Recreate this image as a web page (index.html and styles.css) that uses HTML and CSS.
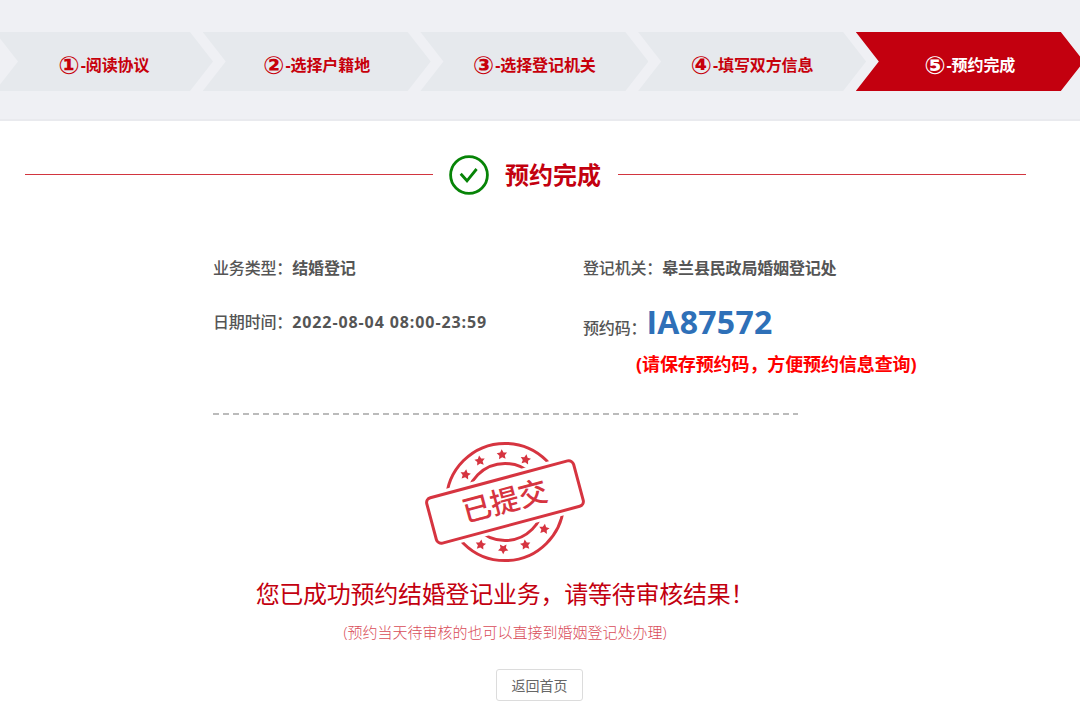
FILE: index.html
```
<!DOCTYPE html>
<html lang="zh-CN">
<head>
<meta charset="UTF-8">
<meta name="viewport" content="width=device-width, initial-scale=1.0">
<title>预约完成</title>
<link rel="stylesheet" href="styles.css">
</head>
<body>
<div class="steps">
	<div class="step first"><span class="num">①</span>-阅读协议</div>
	<div class="step"><span class="num">②</span>-选择户籍地</div>
	<div class="step"><span class="num">③</span>-选择登记机关</div>
	<div class="step"><span class="num">④</span>-填写双方信息</div>
	<div class="step active"><span class="num">⑤</span>-预约完成</div>
</div>

<div class="title">
	<span class="line"></span>
	<svg class="check" width="40" height="40" viewBox="0 0 40 40">
		<circle cx="20" cy="20" r="18.4"/>
		<path d="M11.7 18.8 L18 25.8 L27.6 14"/>
	</svg>
	<h2>预约完成</h2>
	<span class="line"></span>
</div>

<div class="info">
	<div class="item">业务类型：<b>结婚登记</b></div>
	<div class="item">登记机关：<b>皋兰县民政局婚姻登记处</b></div>
	<div class="item">日期时间：<b class="date">2022-08-04 08:00-23:59</b></div>
	<div class="item code-item">预约码：<b class="code">IA87572</b></div>
	<div class="note">(请保存预约码，方便预约信息查询)</div>
</div>

<svg class="divider" width="585" height="2"><path d="M0 1 H585"/></svg>

<div class="result">
	<svg class="stamp" width="164" height="126" viewBox="-82 -63 164 126">
		<defs>
			<path id="star" d="M0 -5.2 L1.7 -2 L5.2 -1.6 L2.7 1 L3.3 4.5 L0 2.8 L-3.3 4.5 L-2.7 1 L-5.2 -1.6 L-1.7 -2 Z"/>
		</defs>
		<circle class="ring" r="58.6"/>
		<circle class="ring" r="38.5"/>
		<g class="stars">
			<use href="#star" transform="translate(-39.5 -27.5) rotate(8)"/>
			<use href="#star" transform="translate(-25.2 -41.3) rotate(-8)"/>
			<use href="#star" transform="translate(-3 -47.5) rotate(-4)"/>
			<use href="#star" transform="translate(20.6 -42.6) rotate(10)"/>
			<use href="#star" transform="translate(-24.3 42.7) rotate(8)"/>
			<use href="#star" transform="translate(-1.8 47) rotate(180)"/>
			<use href="#star" transform="translate(20.4 42.7) rotate(-8)"/>
			<use href="#star" transform="translate(39.2 27) rotate(8)"/>
		</g>
		<g transform="rotate(-15)">
			<rect class="gap" x="-76" y="-23.5" width="152" height="47" rx="5"/>
			<rect class="frame" x="-76" y="-23.5" width="152" height="47" rx="5"/>
			<text x="0" y="9.5" text-anchor="middle">已提交</text>
		</g>
	</svg>
	<div class="message">您已成功预约结婚登记业务，请等待审核结果！</div>
	<div class="tip">(预约当天待审核的也可以直接到婚姻登记处办理)</div>
	<button class="back" type="button">返回首页</button>
</div>
</body>
</html>
```
FILE: styles.css
```
body {
	margin: 0;
	height: 722px;
	overflow: hidden;
	background: #fff;
	color: #555;
	font-family: "Open Sans", "Noto Sans CJK SC", sans-serif;
	font-size: 16px;
}

/* progress bar */
.steps {
	display: flex;
	box-sizing: border-box;
	height: 121px;
	padding-top: 32px;
	background: #eff0f4;
	border-bottom: 2px solid #e9eaee;
	overflow: hidden;
}

.step {
	flex: none;
	width: 228px;
	height: 59px;
	margin-left: -10.3px;
	line-height: 66px;
	text-align: center;
	font-weight: bold;
	letter-spacing: -0.1px;
	color: #c7000b;
	background: #e6e9ed;
	clip-path: polygon(0 0, calc(100% - 23px) 0, 100% 50%, calc(100% - 23px) 100%, 0 100%, 23px 50%);
}

.step.first {
	width: 218px;
	margin-left: -5px;
}

.step.active {
	color: #fff;
	background: #c3000f;
}

.num {
	display: inline-block;
	margin-right: 1px;
	line-height: 20px;
	font-family: "DejaVu Sans", sans-serif;
	font-size: 25px;
	letter-spacing: 0;
	vertical-align: -3px;
}

/* title row */
.title {
	display: flex;
	align-items: center;
	height: 40px;
	padding: 34px 54px 0 25px;
}

.line {
	flex: 1;
	height: 1px;
	margin-bottom: 1px;
	background: #d2353f;
}

.check {
	margin: 0 16px;
	fill: none;
	stroke: #078407;
	stroke-width: 2.8;
}

.title h2 {
	margin: 0 17px 0 0;
	font-size: 24px;
	line-height: 40px;
	color: #c3000f;
}

/* booking details */
.info {
	display: grid;
	grid-template-columns: 370px 360px;
	grid-template-rows: 54px 54px 36px;
	padding: 46px 0 0 213px;
}

.item {
	line-height: 54px;
	font-weight: 500;
	letter-spacing: -0.16px;
	white-space: nowrap;
}

.date {
	letter-spacing: 0.9px;
}

.code-item {
	display: flex;
	align-items: baseline;
}

.code {
	font-size: 32px;
	letter-spacing: 0.3px;
	color: #2e70b8;
}

.note {
	grid-column: 2;
	padding-left: 53px;
	line-height: 30px;
	font-size: 18px;
	font-weight: bold;
	letter-spacing: -0.1px;
	color: #f00;
}

.divider {
	display: block;
	margin: 28px 0 0 213px;
}

.divider path {
	stroke: #bbb;
	stroke-width: 2;
	stroke-dasharray: 6 4;
}

/* result */
.result {
	display: flex;
	flex-direction: column;
	align-items: center;
	width: 1010px;
	padding-top: 24px;
}

.stamp .ring,
.stamp .frame {
	fill: none;
	stroke: #d63440;
	stroke-width: 3;
}

.stamp .gap {
	fill: #fff;
	stroke: #fff;
	stroke-width: 9;
}

.stamp .stars,
.stamp text {
	fill: #d63440;
}

.stamp text {
	font-size: 29px;
	font-weight: 500;
}

.message {
	margin-top: 9px;
	line-height: 40px;
	font-size: 24px;
	letter-spacing: -0.25px;
	color: #c3000f;
}

.tip {
	margin-top: 5px;
	line-height: 26px;
	font-size: 15px;
	font-weight: 300;
	color: #d94c58;
}

.back {
	width: 87px;
	height: 32px;
	margin: 24px 0 0 69px;
	padding: 0;
	border: 1px solid #dcdcdc;
	border-radius: 3px;
	background: #fff;
	font-family: inherit;
	font-size: 14px;
	color: #666;
}
```
